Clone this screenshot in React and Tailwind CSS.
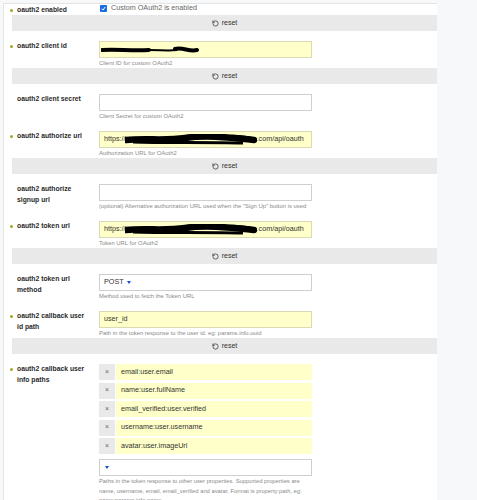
import { RotateCcw } from 'lucide-react'

const font = { fontFamily: '"Liberation Sans", Arial, sans-serif' }

function Dot() {
  return <span className="inline-block w-[3px] h-[3px] rounded-full bg-[#a3a32b] -ml-[2px] mr-[4px] mt-[4px] shrink-0" />
}

function Label({ text, flag }) {
  return (
    <div className="flex items-start pr-[14px]">
      {flag ? <Dot /> : <span className="w-[5px] shrink-0" />}
      <span className="text-[6.8px] font-bold leading-[11px] -mt-px text-[#2a2a2a]">{text}</span>
    </div>
  )
}

function Help({ children }) {
  return <div className="text-[5.9px] leading-[10px] text-[#8a8a8a] whitespace-nowrap">{children}</div>
}

function Reset() {
  return (
    <div className="h-[16px] bg-[#e9e9e9] flex items-center justify-center gap-[3px] text-[7px] text-[#333]">
      <RotateCcw size={7} strokeWidth={2.5} />
      <span>reset</span>
    </div>
  )
}

function Input({ yellow, children }) {
  return (
    <div
      className={
        'w-[213px] h-[17px] border flex items-center px-[4px] text-[7.2px] text-[#333] overflow-hidden ' +
        (yellow ? 'bg-[#ffffc9] border-[#dcdab5]' : 'bg-white border-[#cfcfcf]')
      }
    >
      {children}
    </div>
  )
}

function Caret() {
  return <span className="inline-block w-0 h-0 border-l-[2.5px] border-r-[2.5px] border-t-[3px] border-l-transparent border-r-transparent border-t-[#1450d8]" />
}

function Row({ label, flag, children, help, reset }) {
  return (
    <>
      <div className="grid grid-cols-[87px_1fr] pt-[10px]">
        <Label text={label} flag={flag} />
        <div>
          {children}
          {help && <Help>{help}</Help>}
        </div>
      </div>
      {reset && <Reset />}
    </>
  )
}

function BlobUrl() {
  return (
    <>
      <span>https://</span>
      <svg width="132" height="11" viewBox="0 0 132 11" className="shrink-0 -ml-[1px]">
        <path d="M1 6 C 20 4, 40 7, 60 4 S 100 3, 129 6" stroke="#000" strokeWidth="6.5" fill="none" strokeLinecap="round" />
        <path d="M8 8 C 40 9, 80 8, 118 9" stroke="#000" strokeWidth="3" fill="none" />
        <path d="M100 3 C 110 1, 120 3, 130 5" stroke="#000" strokeWidth="3" fill="none" />
      </svg>
      <span>.com/api/oauth</span>
    </>
  )
}

function TagItem({ text }) {
  return (
    <div className="flex h-[16px] gap-px">
      <div className="w-[16px] bg-[#e9e9e9] flex items-center justify-center text-[7px] text-[#666]">×</div>
      <div className="w-[196px] bg-[#ffffc9] flex items-center px-[5px] text-[7.2px] text-[#333]">{text}</div>
    </div>
  )
}

export default function App() {
  return (
    <div className="w-[477px] h-[500px] overflow-hidden bg-[#f7f8fa] flex" style={font}>
      <div className="w-[434px] h-[520px] ml-[3px] mt-[3px] bg-white border-l border-t border-[#e4e4e4] pl-[8px]">
        <div className="grid grid-cols-[87px_1fr] h-[11px] pt-[1px]">
          <div className="flex items-start">
            <Dot />
            <span className="text-[6.8px] font-bold leading-[9px] text-[#2a2a2a]">oauth2 enabled</span>
          </div>
          <div className="flex items-start gap-[4px]">
            <span className="w-[7px] h-[7px] bg-[#1a6fe0] rounded-[1px] flex items-center justify-center ml-[1px]">
              <svg width="5" height="5" viewBox="0 0 10 10">
                <path d="M1.5 5.5 L4 8 L8.5 2" stroke="#fff" strokeWidth="2" fill="none" />
              </svg>
            </span>
            <span className="text-[7.2px] leading-[6px] text-[#666]">Custom OAuth2 is enabled</span>
          </div>
        </div>
        <Reset />

        <Row label="oauth2 client id" flag help="Client ID for custom OAuth2" reset>
          <Input yellow>
            <svg width="98" height="10" viewBox="0 0 98 10" className="-ml-[3px]">
              <path d="M1 5 C 15 4, 30 6, 48 5" stroke="#000" strokeWidth="4" fill="none" strokeLinecap="round" />
              <path d="M48 5 C 60 5, 68 6, 76 5" stroke="#000" strokeWidth="2" fill="none" />
              <path d="M74 4 C 82 2, 88 7, 96 5" stroke="#000" strokeWidth="4" fill="none" strokeLinecap="round" />
            </svg>
          </Input>
        </Row>

        <Row label="oauth2 client secret" help="Client Secret for custom OAuth2">
          <Input />
        </Row>

        <Row label="oauth2 authorize url" flag help="Authorization URL for OAuth2" reset>
          <Input yellow>
            <BlobUrl />
          </Input>
        </Row>

        <Row
          label="oauth2 authorize signup url"
          help={'(optional) Alternative authorization URL used when the "Sign Up" button is used'}
        >
          <Input />
        </Row>

        <Row label="oauth2 token url" flag help="Token URL for OAuth2" reset>
          <Input yellow>
            <BlobUrl />
          </Input>
        </Row>

        <Row label="oauth2 token url method" help="Method used to fetch the Token URL">
          <Input>
            <span className="mr-[3px]">POST</span>
            <Caret />
          </Input>
        </Row>

        <Row
          label="oauth2 callback user id path"
          flag
          help="Path in the token response to the user id. eg: params.info.uuid"
          reset
        >
          <Input yellow>user_id</Input>
        </Row>

        <div className="grid grid-cols-[87px_1fr] pt-[10px]">
          <Label text="oauth2 callback user info paths" flag />
          <div>
            <div className="flex flex-col gap-[2.5px]">
              <TagItem text="email:user.email" />
              <TagItem text="name:user.fullName" />
              <TagItem text="email_verified:user.verified" />
              <TagItem text="username:user.username" />
              <TagItem text="avatar:user.imageUrl" />
            </div>
            <div className="mt-[5px]">
              <Input>
                <span className="ml-[1px]">
                  <Caret />
                </span>
              </Input>
            </div>
            <div className="w-[214px] text-[5.8px] leading-[9.5px] text-[#8a8a8a] pt-[1px]">
              Paths in the token response to other user properties. Supported properties are name, username, email,
              email_verified and avatar. Format is property:path, eg: name:params.info.name
            </div>
          </div>
        </div>
      </div>
    </div>
  )
}
